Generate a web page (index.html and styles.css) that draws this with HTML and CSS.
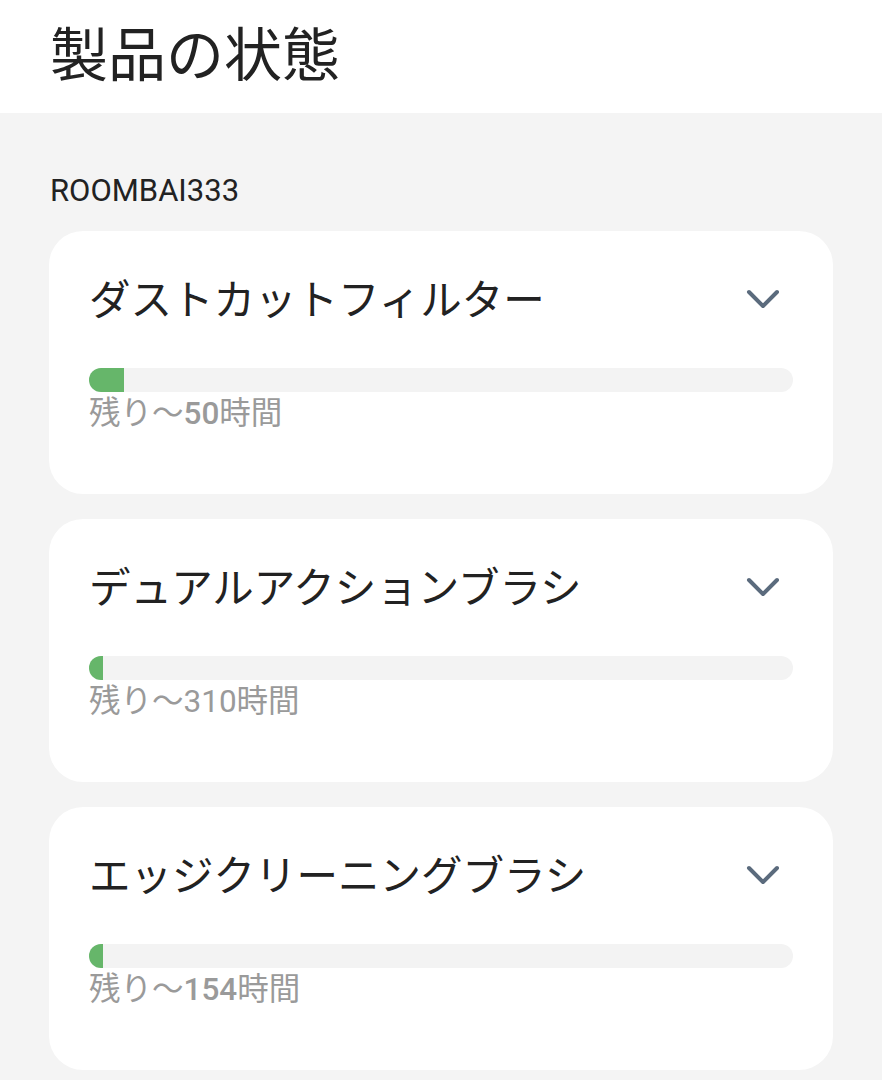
FILE: index.html
```html
<!DOCTYPE html>
<html lang="ja">
<head>
    <meta charset="UTF-8">
    <meta name="viewport" content="width=device-width, initial-scale=1.0">
    <title>製品の状態</title>
    <link rel="stylesheet" href="styles.css">
</head>
<body>
    <header class="page-header">
        <h1>製品の状態</h1>
    </header>

    <main class="content">
        <h2 class="device-name">ROOMBAI333</h2>

        <div class="part-card">
            <div class="part-head">
                <span class="part-title">ダストカットフィルター</span>
                <svg class="chevron" width="34" height="22" viewBox="0 0 34 22"><path d="M3 3 L17 17 L31 3" fill="none" stroke="#5b6b7d" stroke-width="4" stroke-linecap="round" stroke-linejoin="round"/></svg>
            </div>
            <div class="bar"><div class="bar-fill" style="width: 35px;"></div></div>
            <div class="remain">残り〜<b>50</b>時間</div>
        </div>

        <div class="part-card">
            <div class="part-head">
                <span class="part-title">デュアルアクションブラシ</span>
                <svg class="chevron" width="34" height="22" viewBox="0 0 34 22"><path d="M3 3 L17 17 L31 3" fill="none" stroke="#5b6b7d" stroke-width="4" stroke-linecap="round" stroke-linejoin="round"/></svg>
            </div>
            <div class="bar"><div class="bar-fill" style="width: 14px;"></div></div>
            <div class="remain">残り〜310時間</div>
        </div>

        <div class="part-card">
            <div class="part-head">
                <span class="part-title">エッジクリーニングブラシ</span>
                <svg class="chevron" width="34" height="22" viewBox="0 0 34 22"><path d="M3 3 L17 17 L31 3" fill="none" stroke="#5b6b7d" stroke-width="4" stroke-linecap="round" stroke-linejoin="round"/></svg>
            </div>
            <div class="bar"><div class="bar-fill" style="width: 14px;"></div></div>
            <div class="remain">残り〜<b>154</b>時間</div>
        </div>
    </main>
</body>
</html>
```

FILE: styles.css
```css
body {
    margin: 0;
    background-color: #f4f4f4;
    font-family: Roboto, "Noto Sans CJK JP", sans-serif;
    color: #222;
}
.page-header {
    background-color: #fff;
    height: 113px;
    padding-left: 50px;
    box-sizing: border-box;
}
.page-header h1 {
    margin: 0;
    padding-top: 18px;
    font-family: "Noto Sans CJK JP", sans-serif;
    font-size: 58px;
    font-weight: 400;
    line-height: 66px;
}
.content {
    padding: 0 49px 0 49px;
}
.device-name {
    margin: 0;
    padding: 60px 0 22px 1px;
    font-size: 31px;
    font-weight: 400;
    line-height: 36px;
}
.part-card {
    background-color: #fff;
    border-radius: 34px;
    height: 263px;
    box-sizing: border-box;
    padding: 42px 40px 0 40px;
    margin-bottom: 25px;
}
.part-head {
    display: flex;
    align-items: center;
    justify-content: space-between;
    height: 48px;
}
.part-title {
    font-family: "Noto Sans CJK JP", sans-serif;
    font-size: 41.5px;
    line-height: 48px;
}
.chevron {
    margin-right: 13px;
    margin-top: 6px;
}
.bar {
    margin-top: 47px;
    height: 24px;
    background-color: #f3f3f3;
    border-radius: 12px;
}
.bar-fill {
    height: 100%;
    background-color: #66b66a;
    border-radius: 12px 0 0 12px;
}
.remain {
    margin-top: 3px;
    font-size: 31.5px;
    line-height: 38px;
    color: #9a9a9a;
}
.remain b {
    font-weight: 500;
}
```
